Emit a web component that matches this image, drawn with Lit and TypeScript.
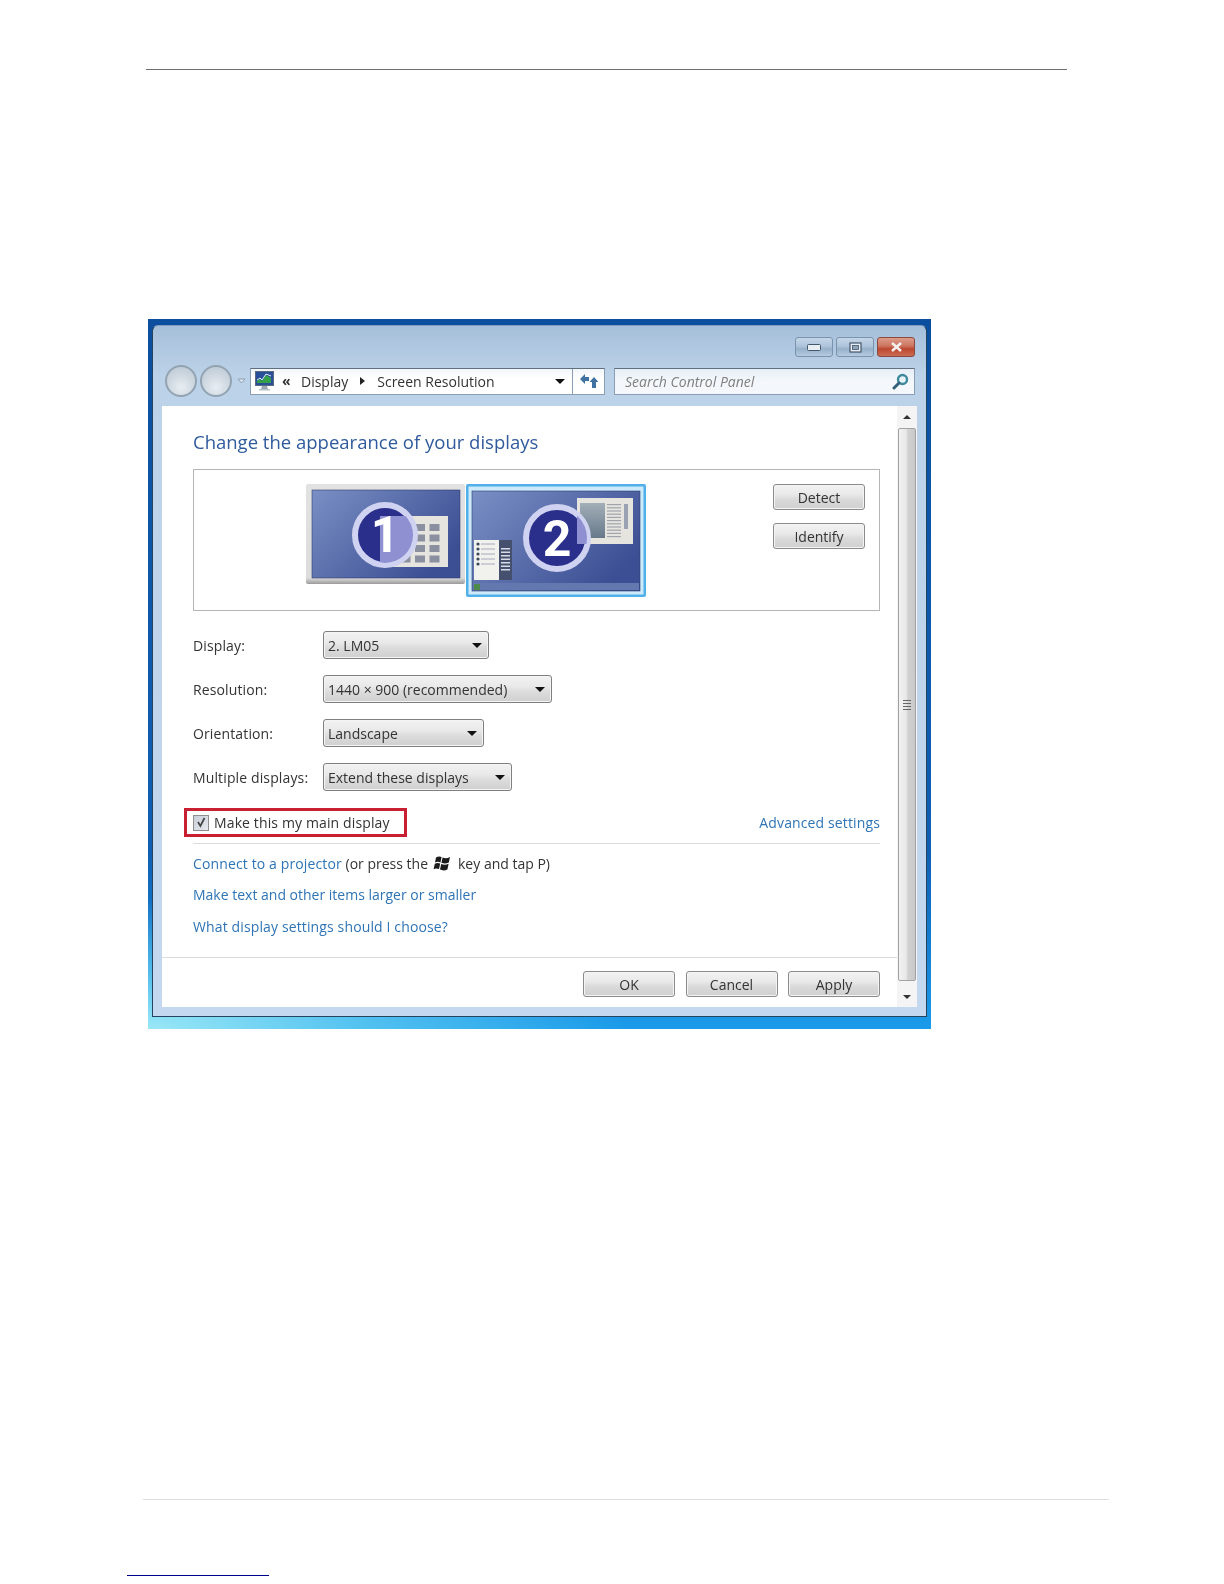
import { LitElement, html, css, svg } from 'lit';
import { customElement } from 'lit/decorators.js';

const ROWS = [
  { label: 'Display:', value: '2. LM05', width: 166 },
  { label: 'Resolution:', value: '1440 × 900 (recommended)', width: 229 },
  { label: 'Orientation:', value: 'Landscape', width: 161 },
  { label: 'Multiple displays:', value: 'Extend these displays', width: 189 },
];

@customElement('app-root')
export class AppRoot extends LitElement {
  static styles = css`
    :host {
      display: block;
      width: 1224px;
      height: 1584px;
      background: #fff;
      font-family: 'Open Sans', 'Noto Sans', sans-serif;
      font-size: 14px;
      color: #333;
      overflow: hidden;
    }
    .page {
      display: flex;
      flex-direction: column;
      align-items: flex-start;
      padding-top: 69px;
    }
    .top-rule {
      width: 921px;
      height: 1px;
      margin-left: 146px;
      background: #6f6f6f;
    }
    .window {
      box-sizing: border-box;
      width: 783px;
      height: 710px;
      margin: 249px 0 0 148px;
      padding: 6px 4px 12px 4px;
      display: flex;
      background: radial-gradient(ellipse 480px 130px at 0% 100%, #9ae8f6 0, rgba(120, 220, 245, 0.6) 45%, rgba(120, 220, 245, 0) 100%),
        linear-gradient(180deg, #0b4f9e 0, #0f5fb4 75%, #1a96e6 98%, #1a9cea 100%);
      filter: blur(0.35px);
    }
    .frame {
      flex: 1;
      box-sizing: border-box;
      display: flex;
      flex-direction: column;
      border: 1px solid #24445f;
      border-top-color: #7f9cbc;
      border-radius: 6px 6px 0 0;
      background: linear-gradient(180deg, #a6bfda 0, #bcd2e8 50px, #c4d8f0 100%);
      padding: 0 9px 9px 9px;
    }
    .captions {
      display: flex;
      justify-content: flex-end;
      gap: 3px;
      height: 20px;
      margin: 11px 2px 8px 0;
    }
    .cap {
      width: 38px;
      box-sizing: border-box;
      display: flex;
      align-items: center;
      justify-content: center;
      border: 1px solid #7a94ae;
      border-radius: 3px;
      background: linear-gradient(180deg, #c4d6e8 0, #aec4da 45%, #97b1cb 60%, #b4cbe0 100%);
    }
    .cap.close {
      border-color: #8a4a3e;
      background: linear-gradient(180deg, #dc9c8a 0, #cc7460 45%, #bc4830 60%, #cc6c54 100%);
    }
    .nav {
      display: flex;
      align-items: center;
      height: 32px;
      padding-left: 3px;
    }
    .round {
      box-sizing: border-box;
      width: 32px;
      height: 32px;
      border-radius: 50%;
      border: 2px solid #93a3b2;
      background: radial-gradient(circle at 50% 72%, #e8eef2 0, #ccd6df 55%, #b8c6d2 100%);
    }
    .round + .round {
      margin-left: 3px;
    }
    .nav-drop {
      width: 18px;
      display: flex;
      justify-content: center;
    }
    .address {
      box-sizing: border-box;
      display: flex;
      align-items: center;
      width: 355px;
      height: 27px;
      background: linear-gradient(180deg, #f2f6fa, #fff 40%);
      border: 1px solid #8a9fb4;
      border-top-color: #5f6f80;
    }
    .address .icon {
      margin: 0 8px 0 4px;
    }
    .crumbs {
      flex: 1;
      display: flex;
      align-items: center;
    }
    .crumb-chev {
      font-weight: 700;
      font-size: 14px;
      line-height: 14px;
      width: 19px;
    }
    .crumb-arrow {
      width: 0;
      height: 0;
      border-left: 5px solid #222;
      border-top: 4px solid transparent;
      border-bottom: 4px solid transparent;
      margin: 0 12px 0 12px;
    }
    .addr-arrow {
      margin-right: 7px;
    }
    .refresh {
      width: 31px;
      display: flex;
      align-items: center;
      justify-content: center;
      height: 100%;
      border-left: 1px solid #8a9fb4;
    }
    .search {
      box-sizing: border-box;
      width: 301px;
      height: 27px;
      margin-left: 9px;
      padding: 0 5px 0 10px;
      display: flex;
      align-items: center;
      justify-content: space-between;
      background: linear-gradient(180deg, #e6eef6, #f4f8fc 50%);
      border: 1px solid #8a9fb4;
      border-top-color: #5f6f80;
      font-style: italic;
      color: #7f7f7f;
    }
    .content {
      flex: 1;
      display: flex;
      margin-top: 9px;
      background: #fff;
    }
    .main {
      flex: 1;
      display: flex;
      flex-direction: column;
    }
    .body {
      flex: 1;
      display: flex;
      flex-direction: column;
      padding: 22px 17px 0 31px;
    }
    h1 {
      margin: 0 0 13px;
      font-size: 18.5px;
      font-weight: 400;
      line-height: 28px;
      color: #2f5a9c;
    }
    .preview {
      box-sizing: border-box;
      height: 142px;
      display: flex;
      justify-content: space-between;
      align-items: flex-start;
      border: 1px solid #b5b5b5;
      padding: 14px 14px 0 112px;
    }
    .monitors {
      display: flex;
      gap: 1px;
    }
    .detect {
      display: flex;
      flex-direction: column;
      gap: 13px;
    }
    .btn {
      box-sizing: border-box;
      width: 92px;
      height: 26px;
      display: flex;
      align-items: center;
      justify-content: center;
      border: 1px solid #8b8b8b;
      border-radius: 3px;
      box-shadow: inset 0 0 0 1px #f4f4f4;
      background: linear-gradient(180deg, #f2f2f2 0, #e9e9e9 40%, #dadada 60%, #cfcfcf 100%);
    }
    .form {
      display: grid;
      grid-template-columns: 130px 1fr;
      row-gap: 16px;
      align-items: center;
      margin-top: 20px;
    }
    .form-label,
    .wide {
      letter-spacing: 0.13px;
    }
    .select {
      box-sizing: border-box;
      height: 28px;
      padding: 0 6px 0 4px;
      display: flex;
      align-items: center;
      justify-content: space-between;
      border: 1px solid #7f7f7f;
      border-radius: 3px;
      box-shadow: inset 0 0 0 1px #f4f4f4;
      background: linear-gradient(180deg, #f2f2f2 0, #e9e9e9 40%, #dcdcdc 60%, #cfcfcf 100%);
    }
    .down {
      width: 0;
      height: 0;
      border-top: 5px solid #111;
      border-left: 5px solid transparent;
      border-right: 5px solid transparent;
    }
    .main-row {
      display: flex;
      justify-content: space-between;
      align-items: center;
      margin-top: 17px;
    }
    .highlight {
      box-sizing: border-box;
      width: 223px;
      height: 29px;
      margin-left: -9px;
      padding-left: 6px;
      display: flex;
      align-items: center;
      gap: 5px;
      border: 3px solid #c81f32;
    }
    .check {
      box-sizing: border-box;
      width: 16px;
      height: 16px;
      display: flex;
      align-items: center;
      justify-content: center;
      border: 1px solid #8e8f8f;
      background: linear-gradient(135deg, #c9cfd8, #e6e9ee);
    }
    .link {
      color: #2f74b5;
    }
    .sep {
      height: 1px;
      background: #dcdcdc;
    }
    .sep.checks {
      margin-top: 6px;
    }
    .links {
      display: flex;
      flex-direction: column;
      gap: 11.5px;
      margin-top: 9px;
    }
    .links div {
      display: flex;
      align-items: center;
      height: 20px;
    }
    .flag {
      margin: 0 7px 0 5px;
    }
    .actions {
      display: flex;
      justify-content: flex-end;
      gap: 10.5px;
      padding: 13px 17px 10px 0;
      border-top: 1px solid #dcdcdc;
    }
    .scroll {
      width: 20px;
      display: flex;
      flex-direction: column;
      align-items: flex-start;
      background: #f4f4f4;
    }
    .scroll-btn {
      width: 18px;
      display: flex;
      align-items: center;
      justify-content: center;
      margin-left: 1px;
    }
    .scroll-btn.up {
      height: 22px;
    }
    .scroll-btn.dn {
      box-sizing: border-box;
      height: 26px;
      padding-top: 6px;
    }
    .tri-up,
    .tri-dn {
      width: 0;
      height: 0;
      border-left: 4px solid transparent;
      border-right: 4px solid transparent;
    }
    .tri-up {
      border-bottom: 4px solid #333;
    }
    .tri-dn {
      border-top: 4px solid #333;
    }
    .thumb {
      box-sizing: border-box;
      flex: 1;
      width: 18px;
      margin-left: 1px;
      display: flex;
      flex-direction: column;
      align-items: center;
      justify-content: center;
      gap: 2px;
      border: 1px solid #a2a2a2;
      border-radius: 2px;
      background: linear-gradient(90deg, #f2f2f2 0, #e8e8e8 45%, #d2d2d2 55%, #c8c8c8 100%);
    }
    .thumb i {
      display: block;
      width: 8px;
      height: 1px;
      background: #666;
    }
    .bottom-rule {
      width: 966px;
      height: 1px;
      margin: 470px 0 0 143px;
      background: #dedede;
    }
    .note-rule {
      width: 142px;
      height: 1px;
      margin: 75px 0 0 127px;
      background: #00008b;
    }
  `;

  private monitorOne() {
    const squares = [];
    for (let r = 0; r < 4; r++) {
      for (let c = 0; c < 4; c++) {
        squares.push(svg`<rect x=${80 + c * 14.5} y=${40 + r * 10.5} width="10" height="7" fill="#8a90a0" />`);
      }
    }
    return html`<svg width="159" height="100" viewBox="0 0 159 100">
      <defs>
        <linearGradient id="m1f" x1="0" y1="0" x2="0" y2="1">
          <stop offset="0" stop-color="#e2e2e2" /><stop offset="0.94" stop-color="#dcdcdc" /><stop offset="1" stop-color="#9a9a9a" />
        </linearGradient>
        <linearGradient id="m1s" x1="0" y1="0" x2="1" y2="0.6">
          <stop offset="0" stop-color="#7a8fc4" /><stop offset="1" stop-color="#3c4f94" />
        </linearGradient>
        <clipPath id="m1c"><circle cx="79" cy="51" r="28" /></clipPath>
      </defs>
      <rect width="159" height="100" rx="2" fill="url(#m1f)" />
      <rect x="6" y="6" width="148" height="88" fill="url(#m1s)" stroke="#2f3f6f" stroke-width="0.6" />
      <rect x="74" y="32" width="68" height="51" fill="#e6e4de" />
      ${squares}
      <circle cx="79" cy="51" r="30" fill="#2b2f8c" stroke="#cfd2f0" stroke-width="6" />
      <rect x="74" y="32" width="68" height="51" fill="#8f90d2" clip-path="url(#m1c)" />
      <text x="79" y="68" text-anchor="middle" font-family="Roboto" font-weight="700" font-size="50" fill="#fff">1</text>
    </svg>`;
  }

  private monitorTwo() {
    const lines = [];
    for (let i = 0; i < 11; i++) {
      lines.push(svg`<rect x="141" y=${20 + i * 3.2} width="14" height="1.2" fill="#a0a4ac" />`);
    }
    const items = [];
    for (let i = 0; i < 5; i++) {
      items.push(svg`<circle cx="12" cy=${60 + i * 5} r="1.6" fill="#3a4a5a" /><rect x="15" y=${59.5 + i * 5} width="14" height="1" fill="#aab" />`);
    }
    const bars = [];
    for (let i = 0; i < 7; i++) {
      bars.push(svg`<rect x="35" y=${64 + i * 3.5} width="9" height="1.5" fill="#d8dbe6" />`);
    }
    return html`<svg width="180" height="113" viewBox="0 0 180 113">
      <defs>
        <linearGradient id="m2s" x1="0" y1="0" x2="1" y2="0.6">
          <stop offset="0" stop-color="#7a8fc4" /><stop offset="1" stop-color="#3c4f94" />
        </linearGradient>
        <linearGradient id="m2p" x1="0" y1="0" x2="0" y2="1">
          <stop offset="0" stop-color="#a3afb8" /><stop offset="1" stop-color="#66788a" />
        </linearGradient>
        <clipPath id="m2c"><circle cx="91" cy="54" r="30" /></clipPath>
      </defs>
      <rect width="180" height="113" rx="2" fill="#4fb0ea" />
      <rect x="2.5" y="2.5" width="175" height="108" fill="#cdeafb" />
      <rect x="6" y="7" width="168" height="100" fill="url(#m2s)" stroke="#2f3f6f" stroke-width="0.6" />
      <rect x="7" y="99" width="166" height="7" fill="#6478b0" />
      <rect x="8" y="100" width="6" height="6" fill="#4d8a4c" />
      <rect x="111" y="14" width="56" height="46" fill="#e6e4de" />
      <rect x="114" y="19" width="25" height="35" fill="url(#m2p)" />
      ${lines}
      <rect x="158" y="20" width="4" height="25" fill="#9aa2b4" />
      <rect x="8" y="56" width="38" height="40" fill="#45506f" />
      <rect x="8" y="56" width="25" height="40" fill="#f1f1ee" />
      ${items} ${bars}
      <circle cx="91" cy="54" r="31" fill="#2b2f8c" stroke="#cfd2f0" stroke-width="6" />
      <rect x="111" y="14" width="56" height="46" fill="#8f90d2" clip-path="url(#m2c)" />
      <text x="91" y="72" text-anchor="middle" font-family="Roboto" font-weight="700" font-size="50" fill="#fff">2</text>
    </svg>`;
  }

  private renderNav() {
    return html`<div class="nav">
      <div class="round"></div>
      <div class="round"></div>
      <div class="nav-drop">
        <svg width="9" height="6" viewBox="0 0 9 6"><path d="M1 1h7L4.5 5z" fill="#dfe8f0" stroke="#8fa0b0" /></svg>
      </div>
      <div class="address">
        <svg class="icon" width="19" height="20" viewBox="0 0 19 20">
          <rect x="0.5" y="0.5" width="18" height="14" fill="#2a4f9a" stroke="#5a6a80" />
          <path d="M2 10l3-2 2 2 4-6 5 3v5H2z" fill="#35a04a" />
          <path d="M2 9l3-2 2 2 4-6 5 2" fill="none" stroke="#d8f0ff" />
          <path d="M7 15h5l1 3H6z" fill="#9aa8b4" /><rect x="4" y="18" width="11" height="1.5" fill="#b8c0c8" />
        </svg>
        <div class="crumbs">
          <span class="crumb-chev">«</span>
          <span>Display</span>
          <span class="crumb-arrow"></span>
          <span>Screen Resolution</span>
        </div>
        <span class="down addr-arrow"></span>
        <div class="refresh">
          <svg width="18" height="16" viewBox="0 0 18 16">
            <path d="M0 6l5-5v3h4v4H5v3z" fill="#3f72a0" />
            <path d="M14 4l4.500 5H16v6h-4V9H9.500z" fill="#3f72a0" />
          </svg>
        </div>
      </div>
      <div class="search">
        <span>Search Control Panel</span>
        <svg width="17" height="17" viewBox="0 0 17 17">
          <circle cx="10.5" cy="6.5" r="4.5" fill="#e8f4f8" stroke="#3d8a9c" stroke-width="2.4" />
          <path d="M7 10l-5 5" stroke="#33607a" stroke-width="3" stroke-linecap="round" />
        </svg>
      </div>
    </div>`;
  }

  render() {
    return html`<div class="page">
      <div class="top-rule"></div>
      <div class="window">
        <div class="frame">
          <div class="captions">
            <div class="cap">
              <svg width="14" height="7" viewBox="0 0 14 7"><rect x="0.5" y="0.5" width="13" height="6" rx="1" fill="#e8eef4" stroke="#44586c" /></svg>
            </div>
            <div class="cap">
              <svg width="13" height="11" viewBox="0 0 13 11"><rect x="1" y="1" width="11" height="9" fill="#e8eef4" stroke="#44586c" stroke-width="1.2" /><rect x="3.5" y="3.5" width="6" height="4" fill="#8ea4ba" stroke="#44586c" stroke-width="0.8" /></svg>
            </div>
            <div class="cap close">
              <svg width="13" height="10" viewBox="0 0 13 10"><path d="M2 1l9 8M11 1l-9 8" stroke="#f4f0ee" stroke-width="2.6" /></svg>
            </div>
          </div>
          ${this.renderNav()}
          <div class="content">
            <div class="main">
              <div class="body">
                <h1>Change the appearance of your displays</h1>
                <div class="preview">
                  <div class="monitors">${this.monitorOne()} ${this.monitorTwo()}</div>
                  <div class="detect">
                    <div class="btn">Detect</div>
                    <div class="btn">Identify</div>
                  </div>
                </div>
                <div class="form">
                  ${ROWS.map(
                    (r) => html`<span class="form-label">${r.label}</span>
                      <div class="select" style="width:${r.width}px">
                        <span>${r.value}</span><span class="down"></span>
                      </div>`
                  )}
                </div>
                <div class="main-row">
                  <div class="highlight">
                    <span class="check">
                      <svg width="10" height="11" viewBox="0 0 10 11"><path d="M2 5l2.400 4L8.500 1" fill="none" stroke="#444" stroke-width="1.700" /></svg>
                    </span>
                    <span class="wide">Make this my main display</span>
                  </div>
                  <span class="link wide">Advanced settings</span>
                </div>
                <div class="sep checks"></div>
                <div class="links">
                  <div>
                    <span class="link wide">Connect to a projector</span>&nbsp;(or press the
                    <svg class="flag" width="18" height="17" viewBox="0 0 18 17">
                      <path d="M3 2.500C5 1 7 1.200 8.600 2L7.400 7.400C5.600 6.600 3.800 6.600 2 7.600z" fill="#1c1c1c" />
                      <path d="M9.600 2.400c2 1 4.400 1.200 7.400-.4l-1.200 5.600c-2.800 1.400-5 1.200-7.400.2z" fill="#1c1c1c" />
                      <path d="M1.800 8.800c1.800-1 3.600-1 5.400-.2L6 14c-1.800-.8-3.600-.8-5.400.2z" fill="#1c1c1c" />
                      <path d="M8.200 9c2.400 1 4.600 1.200 7.400-.2L14.400 14.400c-2.800 1.400-5 1.200-7.400.2z" fill="#1c1c1c" />
                    </svg>
                    key and tap P)
                  </div>
                  <div class="link">Make text and other items larger or smaller</div>
                  <div class="link wide">What display settings should I choose?</div>
                </div>
              </div>
              <div class="actions">
                <div class="btn">OK</div>
                <div class="btn">Cancel</div>
                <div class="btn">Apply</div>
              </div>
            </div>
            <div class="scroll">
              <div class="scroll-btn up"><span class="tri-up"></span></div>
              <div class="thumb"><i></i><i></i><i></i><i></i></div>
              <div class="scroll-btn dn"><span class="tri-dn"></span></div>
            </div>
          </div>
        </div>
      </div>
      <div class="bottom-rule"></div>
      <div class="note-rule"></div>
    </div>`;
  }
}
